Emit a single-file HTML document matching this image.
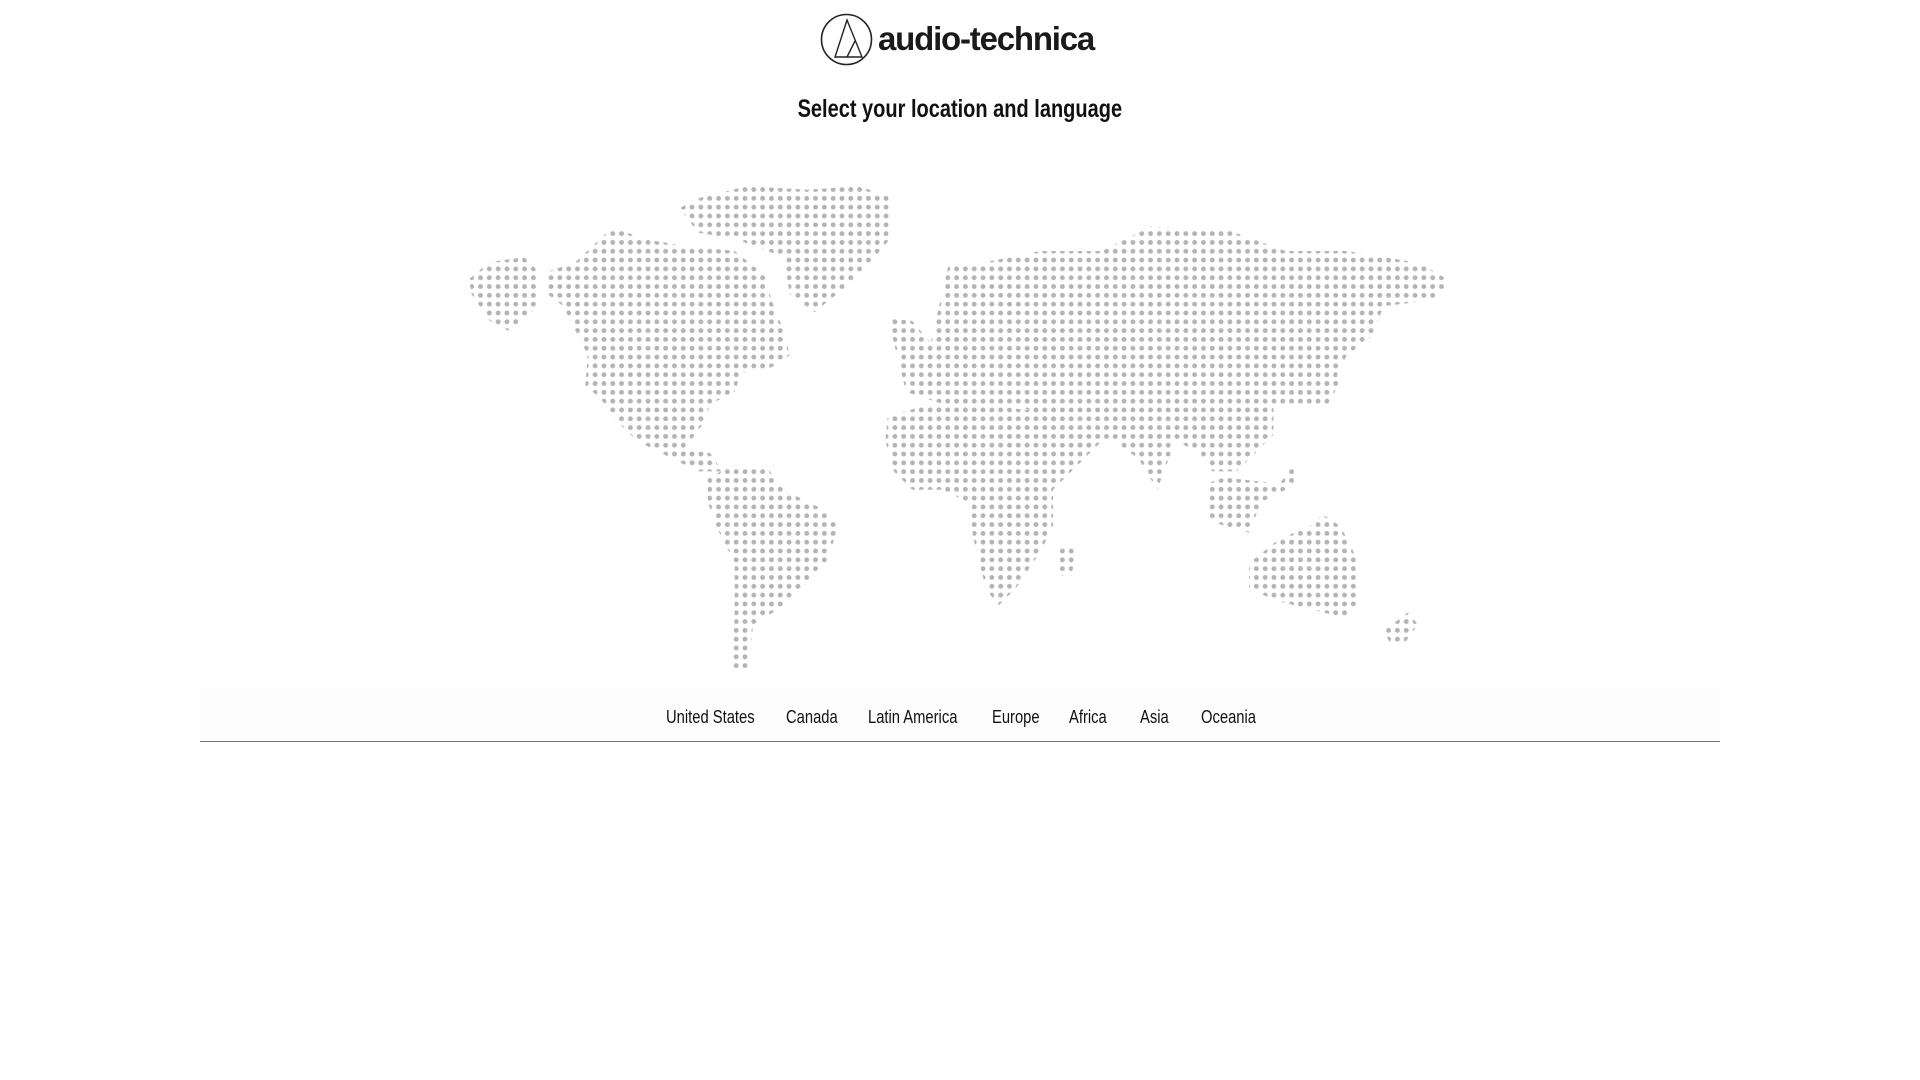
<!DOCTYPE html>
<html><head><meta charset="utf-8"><style>
body{margin:0;width:1920px;height:1080px;background:#fff;font-family:"Liberation Sans",sans-serif;position:relative;overflow:hidden}
.logo{position:absolute;left:820px;top:13px;width:53px;height:53px}
.brand{position:absolute;left:878px;top:20px;font-size:33px;font-weight:bold;color:#1a1a1a;letter-spacing:-1.2px}
h1{position:absolute;left:0;width:1920px;top:95px;margin:0;text-align:center;font-size:25px;font-weight:bold;color:#111}
h1 span{display:inline-block;transform:scaleX(.8)}
.navbg{position:absolute;left:200px;top:686px;width:1520px;height:55px;background:#fdfdfd;border-bottom:1.5px solid #777}
.nav{position:absolute;top:707px;font-size:18px;color:#111;transform:scaleX(.82);transform-origin:left}
svg.map{position:absolute;left:0;top:0}
</style></head><body>
<svg class="logo" viewBox="0 0 53 53"><circle cx="26.5" cy="26.5" r="25" fill="none" stroke="#222" stroke-width="1.6"/><path d="M27 7 L15 44 H42 Z M35 28 L27 44" fill="none" stroke="#222" stroke-width="1.4"/></svg>
<div class="brand">audio-technica</div>
<h1><span>Select your location and language</span></h1>
<svg class="map" width="1920" height="1080">
<defs><pattern id="d" width="7.2" height="7.2" patternUnits="userSpaceOnUse"><circle cx="3.6" cy="3.6" r="2" fill="#b4b4b4"/></pattern></defs>
<g fill="url(#d)"><g transform="scale(1.2245)">
<polygon points="383,228 400,214 428,210 440,222 440,250 415,270 400,262 385,240"/>
<polygon points="447,222 470,214 500,186 530,196 555,200 600,205 625,225 630,245 640,270 645,290 630,300 605,305 600,320 580,330 575,345 560,365 580,385 560,380 540,370 520,360 505,345 490,325 478,315 480,290 470,270 460,250 447,240"/>
<polygon points="555,365 580,370 590,385 570,385"/>
<polygon points="555,170 570,162 610,152 660,155 700,152 727,160 727,195 710,215 690,235 665,255 645,240 640,210 600,195 570,190"/>
<polygon points="578,390 600,380 625,380 640,400 670,415 685,428 675,460 655,480 640,495 615,510 612,548 598,548 600,500 600,460 585,430 578,410"/>
<polygon points="725,260 745,262 760,280 775,215 800,215 850,205 900,205 940,185 1000,187 1050,205 1100,205 1160,215 1185,230 1170,245 1130,250 1120,275 1100,290 1090,310 1070,330 1040,330 1040,355 1030,365 1010,385 990,385 980,370 960,360 945,400 930,375 910,360 880,365 870,350 830,330 800,330 770,330 740,320 735,300"/>
<polygon points="725,340 760,330 800,330 840,335 870,345 885,360 900,360 880,380 860,400 860,430 850,450 830,480 815,495 805,480 795,440 790,410 770,400 745,400 730,385 723,360"/>
<polygon points="865,445 880,445 875,470 865,470"/>
<polygon points="985,395 1000,390 1045,395 1060,375 1060,395 1030,410 1020,435 985,425"/>
<polygon points="1020,460 1045,440 1070,430 1080,420 1095,430 1110,460 1110,490 1100,505 1080,500 1060,495 1040,490 1020,480"/>
<polygon points="1130,515 1150,500 1158,510 1145,528 1135,525"/>
<polygon points="1070,330 1090,305 1095,310 1085,330"/>
</g></g>
</svg>
<div class="navbg"></div>
<div class="nav" style="left:666px">United States</div>
<div class="nav" style="left:786px">Canada</div>
<div class="nav" style="left:868px">Latin America</div>
<div class="nav" style="left:992px">Europe</div>
<div class="nav" style="left:1069px">Africa</div>
<div class="nav" style="left:1140px">Asia</div>
<div class="nav" style="left:1201px">Oceania</div>
</body></html>
